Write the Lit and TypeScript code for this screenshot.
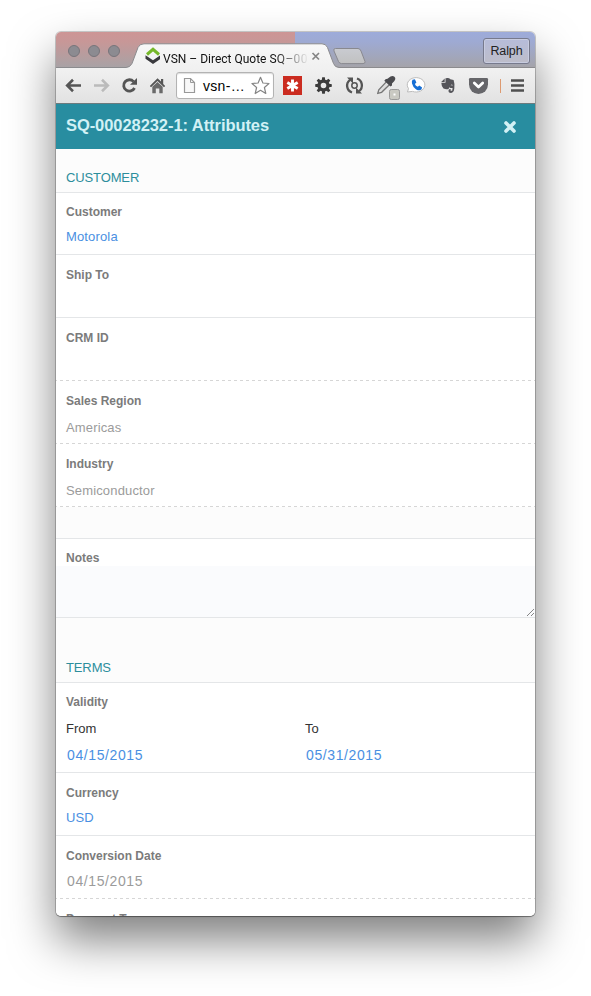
import { LitElement, html, svg, css, nothing } from "lit";
import { customElement, property } from "lit/decorators.js";
import { classMap } from "lit/directives/class-map.js";

// Toolbar icons share one coordinate space; each shows its own slice of it.
const icon = (x: number, w: number, body: unknown) =>
  html`<svg width=${w} height="35" viewBox="${x} 68 ${w} 35">${body}</svg>`;

const gearTeeth = [0, 45, 90, 135, 180, 225, 270, 315];

@customElement("browser-chrome")
export class BrowserChrome extends LitElement {
  static styles = css`
    :host { display: block; }
    svg { display: block; flex: none; }
    .strip { display: grid; height: 36px;
      background: linear-gradient(180deg, rgba(165,163,166,0) 0, rgba(165,163,166,.15) 28%, rgba(165,163,166,.95) 100%),
        linear-gradient(90deg, #cd9595 0 239px, #9dabda 239px); }
    .strip > * { grid-area: 1 / 1; }
    .row { display: flex; align-items: center; height: 36px; }
    .lights { display: flex; gap: 8px; box-sizing: border-box; padding: 2px 0 0 12px; width: 77px; }
    .light { box-sizing: border-box; width: 12px; height: 12px; border-radius: 50%; background: #8c8b91; border: 1px solid #77757b; }
    .title { width: 144px; margin: 18px 0 0 3px; white-space: nowrap;
      font: 12px/18px "Roboto", sans-serif; letter-spacing: 0; color: #111;
      -webkit-mask-image: linear-gradient(90deg, #000 112px, transparent 146px); mask-image: linear-gradient(90deg, #000 112px, transparent 146px); }
    .number { letter-spacing: .3px; }
    .user { box-sizing: border-box; width: 47px; height: 26px; margin: 2px 5px 0 auto; border: 1px solid #777a8d; border-radius: 3px;
      background: linear-gradient(#b6bcda, #bdbdc9); box-shadow: inset 0 0 0 1px #c8cce0; color: #222;
      font: 12.5px/25px "Liberation Sans", sans-serif; text-align: center; letter-spacing: -.1px; }
    .toolbar { display: flex; height: 35px; background: linear-gradient(#f1f1f1, #e2e2e2); }
    .address { display: flex; align-items: center; box-sizing: border-box; width: 98px; height: 27px; margin-top: 4px;
      border: 1px solid #b3b3b3; border-radius: 3px; background: #fff; box-shadow: inset 0 1px 1px #ddd; }
    .url { flex: 1; font: 14px/24px "Liberation Sans", sans-serif; letter-spacing: .3px; color: #000; white-space: nowrap; }
  `;

  render() {
    return html`
      <div class="strip">
        <svg width="479" height="36" viewBox="56 32 479 36">
          <defs>
            <linearGradient id="tab" x2="0" y2="1"><stop stop-color="#f8f8f8"/><stop offset="1" stop-color="#f0f0f0"/></linearGradient>
            <linearGradient id="plus" x2="0" y2="1"><stop stop-color="#c9cbd1"/><stop offset="1" stop-color="#c1c1c1"/></linearGradient>
          </defs>
          <path d="M50 67.500H126Q130 67.500 132 63.500L138 47.500Q139.500 43.800 144 43.800H322Q326 43.800 327.500 47.500L333.500 63.500Q335 67.500 339 67.500H540V70H50Z" fill="url(#tab)" stroke="#8b8b8e"/>
          <path d="M335.500 48.500H358Q360 48.500 361 51L365 61.500Q365.500 63.600 363 63.600H341.500Q339.500 63.600 338.500 61.500L334 51Q333 48.500 335.500 48.500Z" fill="url(#plus)" stroke="#89898f"/>
        </svg>
        <div class="row">
          <div class="lights"><span class="light"></span><span class="light"></span><span class="light"></span></div>
          <svg width="27" height="36" viewBox="133 32 27 36">
            <path d="M147 54.500L153 49.300L159 54.500" fill="none" stroke="#76b82a" stroke-width="3"/>
            <path d="M145.500 55.200V58.800L153 64L160.500 58.800V55.200L153 60.300Z" fill="#3a3a3e"/>
          </svg>
          <div class="title">VSN – Direct Quote <span class="number">SQ–000</span></div>
          <svg width="18" height="36" viewBox="307 32 18 36"><path d="M312.500 53L319 59.500M319 53L312.500 59.500" stroke="#858585" stroke-width="1.700"/></svg>
          <div class="user">Ralph</div>
        </div>
      </div>
      <div class="toolbar">
        ${icon(56, 32, svg`<path d="M81 85.500H67.500M73 79.800L67.200 85.500L73 91.200" fill="none" stroke="#555" stroke-width="2.600"/>`)}
        ${icon(88, 28, svg`<path d="M94 85.500H107.500M102 79.800L107.800 85.500L102 91.200" fill="none" stroke="#bbb" stroke-width="2.600"/>`)}
        ${icon(116, 28, svg`<path d="M133.600 81.600A5.700 5.700 0 1 0 134.500 88" fill="none" stroke="#555" stroke-width="2.800"/><path d="M137 78V84.800H130Z" fill="#555"/>`)}
        ${icon(144, 32, svg`<path d="M149.800 86L157.500 78.200L161 81.600V79H163.200V84L165.200 86L164 87.200L157.500 81L151 87.200Z" fill="#555"/><path d="M152.300 86.800L157.500 81.900L162.700 86.800V93.200H159.300V88.500H155.800V93.200H152.300Z" fill="#6a6a6a"/>`)}
        <div class="address">
          <svg width="26" height="25" viewBox="177 73 26 25"><path d="M184.500 78.500H190.500L194.500 82.500V92.500H184.500Z" fill="#f8f8f8" stroke="#999" stroke-width="1.200"/><path d="M190.500 78.500V82.500H194.500" fill="none" stroke="#999"/></svg>
          <span class="url">vsn-…</span>
          <svg width="24" height="25" viewBox="249 73 24 25"><path d="M260.500 77.300L262.900 83L269 83.500L264.400 87.500L265.800 93.500L260.500 90.300L255.200 93.500L256.600 87.500L252 83.500L258.100 83Z" fill="#fff" stroke="#858585" stroke-width="1.200" stroke-linejoin="round"/></svg>
        </div>
        ${icon(274, 34, svg`<rect x="283" y="76" width="19" height="19" fill="#cb2c20"/><path d="M292.500 79.500V91.500M287.300 82.500L297.700 88.500M297.700 82.500L287.300 88.500" stroke="#fff" stroke-width="2.900"/>`)}
        ${icon(308, 32, svg`${gearTeeth.map((a) => svg`<path d="M321.600 81L322.200 77.200H324.800L325.400 81Z" fill="#3c3c3c" transform="rotate(${a} 323.500 85.500)"/>`)}<circle cx="323.500" cy="85.500" r="4.400" fill="none" stroke="#3c3c3c" stroke-width="3.200"/>`)}
        ${icon(340, 30, svg`<g fill="none" stroke="#555" stroke-width="2.300"><path d="M352 92.500A7.300 7.300 0 0 1 350 79.800"/><path d="M357 78.500A7.300 7.300 0 0 1 359 91.200"/></g><path d="M347 77.500H353V83.500ZM362 93.500H356V87.500Z" fill="#555"/><circle cx="354.500" cy="85.500" r="2.700" fill="none" stroke="#555" stroke-width="1.500"/>`)}
        ${icon(370, 32, svg`<path d="M377.800 93.300L378.800 89.800L386.800 81.300L389.900 84.200L381.600 92.300Z" fill="#dedede" stroke="#777" stroke-width="1.300"/><path d="M385.500 79.200L387.500 78.800L390.500 76.500Q394 75.200 395.300 78Q395.500 79.800 394.200 81.200L392 83.400V85.500L390.500 86.500L384.300 80.700Z" fill="#4b4b4f"/><rect x="389.500" y="89.500" width="10" height="10" rx="1.800" fill="#c9c9c2" stroke="#999"/><rect x="393.500" y="93.500" width="2" height="2" fill="#fff"/>`)}
        ${icon(402, 30, svg`<path d="M407.500 92L408.500 88.500A8.800 7.200 0 1 1 412.500 91.400Z" fill="#fff" stroke="#bbb"/><path d="M412.500 79.800L414.900 79.200L416.400 82.500L414.900 84Q415.600 86 417.800 86.800L419.300 85.500L422.100 87.500L421.400 89.500Q419.500 91.200 416.200 89.400Q412.900 87.400 412 83.500Q411.500 81.200 412.500 79.800Z" fill="#1870d5"/>`)}
        ${icon(432, 30, svg`<path d="M445.500 78.300Q449 77.300 450.300 79.200L453.600 80Q454.900 83.500 454.300 88.500Q453.800 93 451 92.900Q448 92.800 448.600 89.900Q449 89 450.600 89.100V90.800H452.200L452.600 88Q450.500 88.400 449.400 87.200L448.500 89Q446 89.700 443.500 88.600Q441.400 86.500 441.300 82.800H445.500Z" fill="#55555a"/><path d="M441.200 82L444.700 78.500V82Z" fill="#55555a"/><path d="M450.600 85.200Q451.800 83.800 453 85.500Z" fill="#ddd"/>`)}
        ${icon(462, 32, svg`<path d="M470.300 78H486.700Q488 78 488 79.300V84.500A9.500 9.500 0 0 1 469 84.500V79.300Q469 78 470.300 78Z" fill="#66666a"/><path d="M474.300 83L478.500 87L482.700 83" fill="none" stroke="#fff" stroke-width="2.800" stroke-linecap="round" stroke-linejoin="round"/>`)}
        ${icon(494, 11, svg`<path d="M500.500 79V93" stroke="#dd9a70"/>`)}
        ${icon(505, 30, svg`<path d="M511 80.500H524M511 85.500H524M511 90.500H524" stroke="#505050" stroke-width="2.400"/>`)}
      </div>
    `;
  }
}

@customElement("form-field")
export class FormField extends LitElement {
  @property() label = "";
  @property() value = "";
  @property({ type: Boolean }) locked = false;
  @property({ type: Boolean }) date = false;

  static styles = css`
    :host { display: block; }
    .field { box-sizing: border-box; height: 63px; padding: 11px 10px 0; background: #fff; border-bottom: 1px solid #e4e6e8;
      font-family: "Liberation Sans", Arial, sans-serif; }
    :host(.first) .field { height: 62px; padding-top: 10px; }
    .locked { border-bottom: 0; background: repeating-linear-gradient(90deg, #d6d6d6 0 3px, transparent 3px 6px) -2px 100% / 481px 1px no-repeat #fff; }
    .label { font-size: 12px; line-height: 18px; font-weight: 700; color: #7b7b7b; }
    .value { margin-top: 7px; font-size: 13px; line-height: 18px; letter-spacing: .15px; color: #4a90e2; }
    .locked .value { margin-top: 9px; color: #9b9b9b; }
    .field .date { padding-left: 1px; font-size: 14px; letter-spacing: .6px; }
    .locked .date { margin-top: 7px; }
  `;

  render() {
    return html`<div class=${classMap({ field: true, locked: this.locked })}>
      <div class="label">${this.label}</div>
      ${this.value ? html`<div class=${classMap({ value: true, date: this.date })}>${this.value}</div>` : nothing}
    </div>`;
  }
}

@customElement("app-root")
export class AppRoot extends LitElement {
  static styles = css`
    :host { display: block; height: 996px; overflow: hidden; background: #fff; font-family: "Liberation Sans", Arial, sans-serif; }
    .wrap { display: flow-root; height: 996px; }
    .window { width: 479px; height: 884px; margin: 32px 0 0 56px; overflow: hidden; border-radius: 5px; background: #fff;
      box-shadow: 0 0 0 1px rgba(0,0,0,.18), 0 1px 1px rgba(0,0,0,.3), 0 24px 46px rgba(0,0,0,.5); }
    .header { display: flex; align-items: center; justify-content: space-between; box-sizing: border-box; height: 46px; padding: 0 19px 0 10px;
      background: #288da0; border-top: 1px solid #6b7b7e; color: #d2f1f5; }
    .heading { padding-bottom: 2px; font-size: 16.5px; font-weight: 700; letter-spacing: -.07px; }
    .section { display: flex; align-items: flex-end; box-sizing: border-box; height: 44px; padding: 0 10px 5px; background: #fcfcfc; border-bottom: 1px solid #e4e6e8;
      color: #2d8e9c; font-size: 13px; line-height: 18px; letter-spacing: -.12px; }
    .terms { height: 65px; }
    .spacer { box-sizing: border-box; height: 32px; background: #fcfcfc; border-bottom: 1px solid #e4e6e8; }
    .label { font-size: 12px; line-height: 18px; font-weight: 700; color: #7b7b7b; }
    .notes { box-sizing: border-box; height: 79px; padding-top: 10px; border-bottom: 1px solid #e4e6e8; }
    .notes .label { height: 17px; padding-left: 10px; }
    .area { display: flex; align-items: flex-end; justify-content: flex-end; height: 51px; background: #fafbfd; }
    .validity { box-sizing: border-box; height: 90px; padding: 10px 0 0 10px; border-bottom: 1px solid #e4e6e8; }
    .range { display: grid; grid-template-columns: 239px 1fr; margin-top: 9px; }
    .caption { font-size: 13px; line-height: 18px; color: #333; }
    .date { padding-left: 1px; margin-top: 8px; font-size: 14px; line-height: 19px; letter-spacing: .6px; color: #4a90e2; }
  `;

  render() {
    return html`<div class="wrap"><div class="window">
      <browser-chrome></browser-chrome>
      <div class="header">
        <div class="heading">SQ-00028232-1: Attributes</div>
        <svg width="12" height="12" viewBox="0 0 12 12"><path d="M2 2L10 10M10 2L2 10" stroke="#d2f1f5" stroke-width="3.600" stroke-linecap="round"/></svg>
      </div>
      <div class="section">CUSTOMER</div>
      <form-field class="first" label="Customer" value="Motorola"></form-field>
      <form-field label="Ship To"></form-field>
      <form-field label="CRM ID" locked></form-field>
      <form-field label="Sales Region" value="Americas" locked></form-field>
      <form-field label="Industry" value="Semiconductor" locked></form-field>
      <div class="spacer"></div>
      <div class="notes">
        <div class="label">Notes</div>
        <div class="area"><svg width="9" height="9" viewBox="0 0 9 9"><path d="M1 8L8 1M5 8L8 5" stroke="#555" stroke-width="1" stroke-dasharray="1 .4"/></svg></div>
      </div>
      <div class="section terms">TERMS</div>
      <div class="validity">
        <div class="label">Validity</div>
        <div class="range">
          <div><div class="caption">From</div><div class="date">04/15/2015</div></div>
          <div><div class="caption">To</div><div class="date">05/31/2015</div></div>
        </div>
      </div>
      <form-field label="Currency" value="USD"></form-field>
      <form-field label="Conversion Date" value="04/15/2015" locked date></form-field>
      <form-field label="Payment Terms"></form-field>
    </div></div>`;
  }
}
